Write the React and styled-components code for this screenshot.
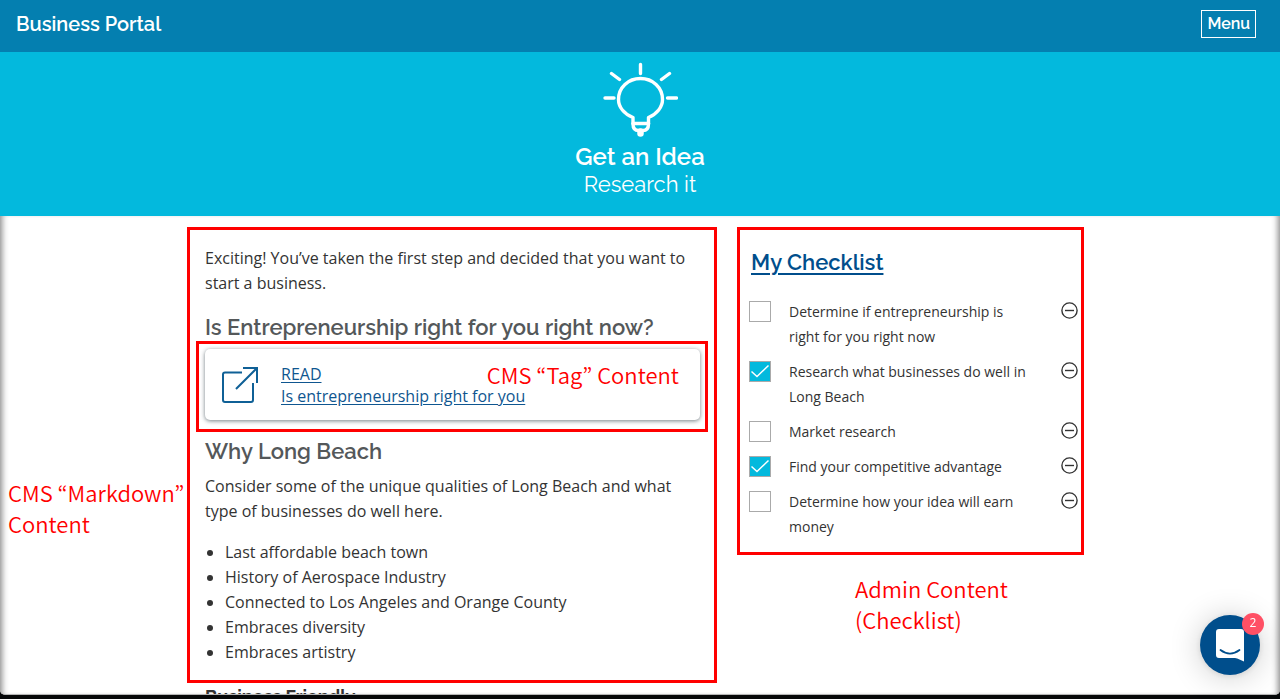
import React, { useState } from "react";
import styled, { createGlobalStyle } from "styled-components";

const heading = `"Raleway", "Lato", sans-serif`;

const GlobalStyle = createGlobalStyle`
  *, *::before, *::after { box-sizing: border-box; }
  body {
    margin: 0;
    background: #050708;
    color: #333;
    font: 16px/25px "Open Sans", sans-serif;
  }
  h1, h2, h3, p, ul { margin: 0; padding: 0; font-weight: 400; }
  button { font: inherit; cursor: pointer; }
`;

const Window = styled.div`
  position: relative;
  display: flex;
  flex-direction: column;
  height: calc(100vh - 4px);
  overflow: hidden;
  background: #fff;
  border-bottom: 1px solid #b5b5b5;
  border-radius: 0 0 5px 5px;
`;

const TopBar = styled.header`
  display: flex;
  flex: none;
  align-items: center;
  justify-content: space-between;
  height: 52px;
  padding: 0 24px 4px 16px;
  background: #047fb0;
  color: #fff;
  font-family: ${heading};
`;

const Brand = styled.a`
  color: inherit;
  font-size: 20px;
  font-weight: 600;
  line-height: 28px;
  text-decoration: none;
`;

const MenuButton = styled.button`
  height: 28px;
  padding: 0 5px;
  border: 1px solid #fff;
  background: transparent;
  color: #fff;
  font-size: 16px;
  font-weight: 600;
  line-height: 24px;
`;

const Hero = styled.section`
  display: flex;
  flex: none;
  flex-direction: column;
  align-items: center;
  height: 164px;
  padding-top: 10px;
  background: #03b9dd;
  color: #fff;
  font-family: ${heading};
`;

const HeroTitle = styled.h1`
  margin-top: 5px;
  font-size: 24px;
  font-weight: 600;
  line-height: 28px;
`;

const HeroSubtitle = styled.p`
  font-size: 22px;
  line-height: 26px;
`;

const Body = styled.main`
  display: grid;
  flex: 1;
  grid-template-columns: 187fr 530fr 367fr 196fr;
  align-items: start;
  min-height: 0;
  padding-top: 11px;
  overflow: hidden;
  box-shadow: inset 7px 0 6px -5px #888, inset -7px 0 6px -5px #888;
`;

const Note = styled.p`
  color: #f00;
  font-family: "Noto Sans CJK KR", sans-serif;
  font-size: 22px;
  font-weight: 350;
  line-height: 31px;
`;

const GutterNote = styled(Note)`
  padding: 250px 0 0 8px;
`;

const AdminNote = styled(Note)`
  padding: 18px 60px 0 118px;
`;

const Outline = styled.section`
  border: 3px solid #f00;
`;

const Article = styled(Outline)`
  padding: 16px 14px 15px 15px;
`;

const ArticleHeading = styled.h2`
  margin: ${(p) => p.$top}px 0 ${(p) => p.$bottom}px;
  color: #54585a;
  font-family: ${heading};
  font-size: 22px;
  font-weight: 600;
  line-height: 28px;
`;

const NextHeading = styled.h3`
  padding: 1px 18px;
  font-family: ${heading};
  font-size: 18px;
  font-weight: 700;
  line-height: 25px;
`;

const TagOutline = styled(Outline)`
  position: relative;
  margin: 0 -8px 0 -9px;
  padding: 5px 5px 9px 6px;
`;

const TagCard = styled.div`
  display: flex;
  align-items: center;
  gap: 22px;
  height: 71px;
  padding-left: 16px;
  border-radius: 5px;
  box-shadow: 0 1px 4px rgba(40, 55, 65, 0.65);
`;

const TagLink = styled.a`
  display: flex;
  flex-direction: column;
  color: #0f5690;
  line-height: 22px;
  text-underline-offset: 2px;
`;

const TagNote = styled(Note)`
  position: absolute;
  top: 15px;
  right: 26px;
`;

const BulletList = styled.ul`
  margin-top: 16px;
  padding-left: 20px;
`;

const Sidebar = styled.aside`
  padding-left: 20px;
`;

const Checklist = styled(Outline)`
  padding: 18px 3px 13px 9px;
`;

const ChecklistHeading = styled.h2`
  padding-left: 2px;
  font-family: ${heading};
  font-size: 22px;
  font-weight: 600;
  line-height: 28px;

  a { color: #004e8c; text-underline-offset: 3px; text-decoration-thickness: 2px; }
`;

const Items = styled.ul`
  display: grid;
  gap: 10px;
  margin-top: 23px;
  list-style: none;
`;

const Item = styled.li`
  display: flex;
  align-items: flex-start;
`;

const ItemLabel = styled.label`
  display: flex;
  flex: 1;
  gap: 18px;
  font-size: 14px;
`;

const Tick = styled.span`
  display: grid;
  flex: none;
  width: 22px;
  height: 22px;
  margin-top: 2px;

  > * { grid-area: 1 / 1; }
  svg { pointer-events: none; }
`;

const TickInput = styled.input`
  width: 22px;
  height: 21px;
  margin: 0;
  border: 1px solid #aaa;
  appearance: none;
  background: #fff;

  &:checked { background: #03b9dd; }
`;

const RemoveButton = styled.button`
  display: flex;
  flex: none;
  width: 17px;
  height: 17px;
  margin: 3px 0 0 30px;
  padding: 0;
  border: 0;
  background: none;
`;

const ChatButton = styled.button`
  position: fixed;
  right: 20px;
  bottom: 24px;
  display: grid;
  place-items: center;
  width: 60px;
  height: 60px;
  padding: 0;
  border: 0;
  border-radius: 50%;
  background: #004e8c;
  box-shadow: 0 1px 6px rgba(0, 0, 0, 0.1), 0 2px 32px rgba(0, 0, 0, 0.2);
`;

const Badge = styled.span`
  position: absolute;
  top: -2px;
  right: -4px;
  width: 22px;
  height: 22px;
  border-radius: 50%;
  background: #ff5065;
  color: #fff;
  font-size: 12px;
  line-height: 20px;
  text-align: center;
`;

const BulbIcon = () => (
  <svg width="76" height="76" viewBox="0 0 76 76" fill="none" stroke="#fff" strokeWidth="3.4" strokeLinecap="round" strokeLinejoin="round" aria-hidden="true">
    <path d="M38.5 2.5v9M9.5 11.500l8 6M67.500 11.500l-8 6M3 36h9M65.500 36h9" />
    <path d="M31 56.500C22 53 16.500 45 16.500 37c0-12 9.800-20.500 22-20.500s22 8.500 22 20.500c0 8-5.500 16-14 19.500V63c0 3.500-2 5.500-5 5.500h-5.500c-3 0-5-2-5-5.500z" stroke="none" />
    <path d="M31 55.500C22 52 16.500 45 16.500 37.500c0-12 9.800-21 22-21s22 9 22 21c0 7.500-5.500 14.500-14 18V62c0 4-2 6.500-5.500 6.500h-4.500c-3.500 0-5.500-2.500-5.500-6.500z" />
    <path d="M31 61.500h15.500" />
    <path d="M38.500 69.500v2" strokeWidth="6.500" />
  </svg>
);

const ExternalIcon = () => (
  <svg width="38" height="38" viewBox="0 0 38 38" fill="none" stroke="#0f6096" strokeWidth="2" aria-hidden="true">
    <path d="M21 6.500H4Q2 6.500 2 8.500V34q0 2 2 2h26q2 0 2-2V17M22 2h14v15M36 2L15 23" />
  </svg>
);

const CheckIcon = () => (
  <svg width="22" height="21" viewBox="0 0 22 21" fill="none" stroke="#fff" strokeWidth="1.5" aria-hidden="true">
    <path d="M2.500 10.500l5.500 5L19.500 4.500" />
  </svg>
);

const MinusIcon = () => (
  <svg width="17" height="17" viewBox="0 0 17 17" fill="none" stroke="#333" strokeWidth="1.4" aria-hidden="true">
    <circle cx="8.500" cy="8.500" r="7.600" />
    <path d="M4 8.500h9" />
  </svg>
);

const ChatIcon = () => (
  <svg width="30" height="34" viewBox="0 0 30 34" aria-hidden="true">
    <path d="M4 1h22a3 3 0 0 1 3 3v29.500c-3-1.500-6-3-9-3.500H4a3 3 0 0 1-3-3V4a3 3 0 0 1 3-3z" fill="#fff" />
    <path d="M5.500 22c6 4.500 13 4.500 19 0" fill="none" stroke="#004e8c" strokeWidth="1.800" strokeLinecap="round" />
  </svg>
);

const qualities = [
  "Last affordable beach town",
  "History of Aerospace Industry",
  "Connected to Los Angeles and Orange County",
  "Embraces diversity",
  "Embraces artistry",
];

const tasks = [
  { text: "Determine if entrepreneurship is right for you right now", done: false },
  { text: "Research what businesses do well in Long Beach", done: true },
  { text: "Market research", done: false },
  { text: "Find your competitive advantage", done: true },
  { text: "Determine how your idea will earn money", done: false },
];

function ChecklistItem({ task, id }) {
  const [done, setDone] = useState(task.done);
  return (
    <Item>
      <ItemLabel htmlFor={id}>
        <Tick>
          <TickInput id={id} type="checkbox" checked={done} onChange={(e) => setDone(e.target.checked)} />
          {done && <CheckIcon />}
        </Tick>
        <span>{task.text}</span>
      </ItemLabel>
      <RemoveButton type="button" aria-label={`Remove ${task.text}`}>
        <MinusIcon />
      </RemoveButton>
    </Item>
  );
}

export default function App() {
  return (
    <>
      <GlobalStyle />
      <Window>
        <TopBar>
          <Brand href="#home">Business Portal</Brand>
          <MenuButton type="button">Menu</MenuButton>
        </TopBar>
        <Hero>
          <BulbIcon />
          <HeroTitle>Get an Idea</HeroTitle>
          <HeroSubtitle>Research it</HeroSubtitle>
        </Hero>
        <Body>
          <GutterNote>CMS “Markdown” Content</GutterNote>
          <div>
            <Article>
              <p>Exciting! You’ve taken the first step and decided that you want to start a business.</p>
              <ArticleHeading $top={17} $bottom={0}>Is Entrepreneurship right for you right now?</ArticleHeading>
              <TagOutline>
                <TagCard>
                  <ExternalIcon />
                  <TagLink href="#read">
                    <span>READ</span>
                    <span>Is entrepreneurship right for you</span>
                  </TagLink>
                </TagCard>
                <TagNote>CMS “Tag” Content</TagNote>
              </TagOutline>
              <ArticleHeading $top={5} $bottom={9}>Why Long Beach</ArticleHeading>
              <p>Consider some of the unique qualities of Long Beach and what type of businesses do well here.</p>
              <BulletList>
                {qualities.map((q) => <li key={q}>{q}</li>)}
              </BulletList>
            </Article>
            <NextHeading>Business Friendly</NextHeading>
          </div>
          <Sidebar>
            <Checklist>
              <ChecklistHeading><a href="#checklist">My Checklist</a></ChecklistHeading>
              <Items>
                {tasks.map((task, i) => <ChecklistItem key={task.text} task={task} id={`task-${i}`} />)}
              </Items>
            </Checklist>
            <AdminNote>Admin Content (Checklist)</AdminNote>
          </Sidebar>
        </Body>
      </Window>
      <ChatButton type="button" aria-label="Open chat, 2 unread messages">
        <ChatIcon />
        <Badge>2</Badge>
      </ChatButton>
    </>
  );
}
